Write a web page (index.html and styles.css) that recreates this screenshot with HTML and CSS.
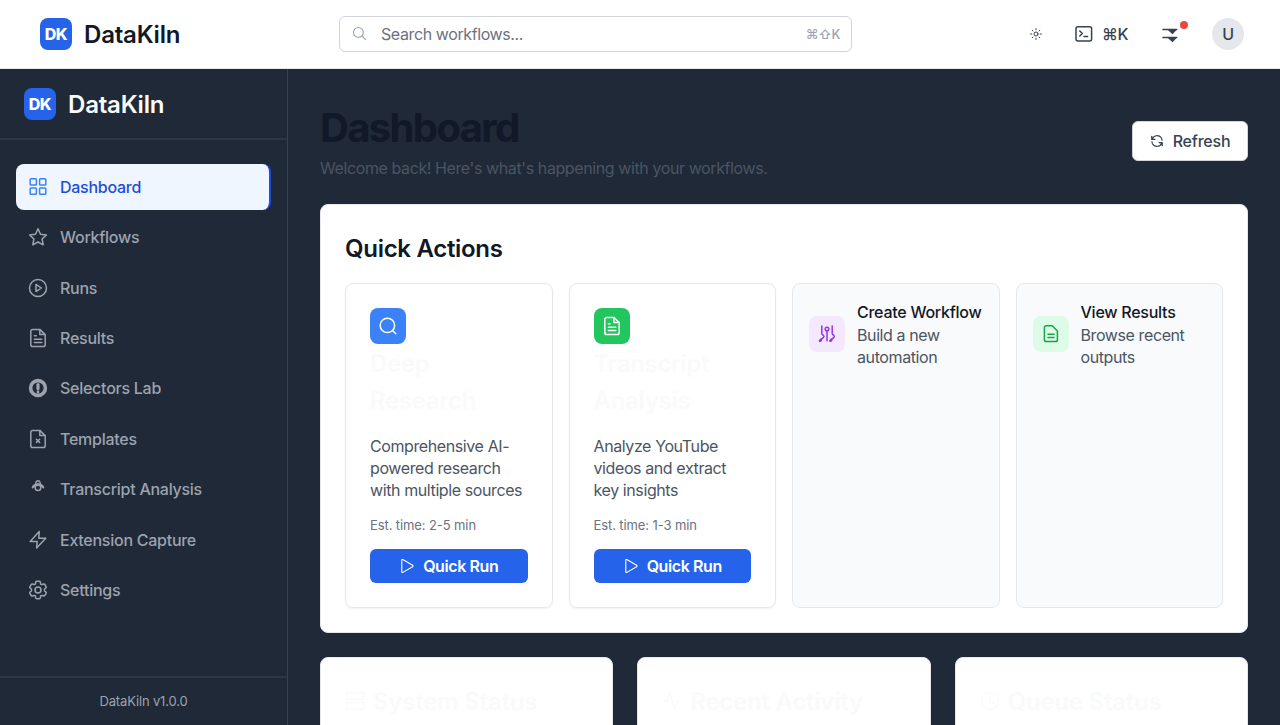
FILE: index.html
```html
<!DOCTYPE html>
<html lang="en">
<head>
<meta charset="utf-8">
<title>DataKiln</title>
<link rel="stylesheet" href="styles.css">
</head>
<body>
<header class="topbar">
  <div class="brand"><span class="logo">DK</span><span class="brand-name">DataKiln</span></div>
  <div class="search">
    <svg class="search-icon" viewBox="0 0 16 16"><circle cx="6.4" cy="6.4" r="4.9"/><path d="m10 10 3.6 3.6"/></svg>
    <span class="search-text">Search workflows...</span>
    <span class="search-keys">⌘⇧K</span>
  </div>
  <div class="tools">
    <svg class="sun" viewBox="0 0 12 12"><circle cx="6" cy="6" r="2"/><path d="M6 .6v1.2M6 10.2v1.2M.6 6h1.2M10.2 6h1.2M2.2 2.2l.8.8M9 9l.8.8M9.8 2.2l-.8.8M3 9l-.8.8"/></svg>
    <span class="command"><svg viewBox="0 0 20 20"><rect x="2" y="2.7" width="15.6" height="14.2" rx="2"/><path d="m5.8 7 2.6 2.5-2.6 2.5M10 12.6h3.6"/></svg><span>⌘K</span></span>
    <span class="bell"><svg viewBox="0 0 20 20"><path d="M3 5.6h13.8M3 13.6h13.8"/><path class="fill" d="M7.6 5.8h9.2l-4.3 4.4zM7.6 13.8h9.2l-4.3 4.4z"/></svg><i class="dot"></i></span>
    <span class="avatar">U</span>
  </div>
</header>
<div class="shell">
  <aside class="sidebar">
    <div class="side-head"><span class="logo">DK</span><span class="brand-name">DataKiln</span></div>
    <nav class="nav">
      <a class="item active"><svg viewBox="0 0 20 20"><rect x="2.2" y="1.8" width="6.2" height="6.2" rx=".8"/><rect x="11.6" y="1.8" width="6.2" height="6.2" rx=".8"/><rect x="2.2" y="11" width="6.2" height="6.2" rx=".8"/><rect x="11.6" y="11" width="6.2" height="6.2" rx=".8"/></svg><span>Dashboard</span></a>
      <a class="item"><svg viewBox="0 0 20 20"><path d="m10 1.8 2.5 5.4 5.9.7-4.3 4.1 1.1 5.8-5.2-2.8-5.2 2.8 1.1-5.8-4.3-4.1 5.9-.7z"/></svg><span>Workflows</span></a>
      <a class="item"><svg viewBox="0 0 20 20"><circle cx="10" cy="10" r="8.5"/><path d="M8 6.4v7.2l5.3-3.6z"/></svg><span>Runs</span></a>
      <a class="item"><svg viewBox="0 0 20 20"><path d="M11.8 1.4H4.6a1.8 1.8 0 0 0-1.8 1.8v13.6a1.8 1.8 0 0 0 1.8 1.8h10.8a1.8 1.8 0 0 0 1.8-1.8V6.6zM11.8 1.4v5.2h5.4M6.4 7.8h1.8M6.4 11.2h7.4M6.4 14.4h7.4"/></svg><span>Results</span></a>
      <a class="item"><svg viewBox="0 0 20 20"><circle cx="10" cy="10" r="7.4" stroke-width="3.6"/><path d="M10 6.6v4.2" stroke-width="3.2"/><path d="M10 14v.1" stroke-width="2.8"/></svg><span>Selectors Lab</span></a>
      <a class="item"><svg viewBox="0 0 20 20"><path d="M11.8 1.4H4.6a1.8 1.8 0 0 0-1.8 1.8v13.6a1.8 1.8 0 0 0 1.8 1.8h10.8a1.8 1.8 0 0 0 1.8-1.8V6.6zM11.8 1.4v5.2h5.4M8.4 10.2l3.2 3.2M11.6 10.2l-3.2 3.2"/></svg><span>Templates</span></a>
      <a class="item"><svg viewBox="0 0 20 20"><circle cx="10" cy="8.8" r="2.8"/><path d="M4.4 8.7c.5-1.8 1.8-3 3.2-3.2.1-2 .7-3.8 2.4-3.8s2.3 1.8 2.4 3.8c1.4.2 2.7 1.4 3.2 3.2M6.4 7.4l3.6-2.8 3.6 2.8M5 8.4l2-2.2M15 8.4l-2-2.2"/></svg><span>Transcript Analysis</span></a>
      <a class="item"><svg viewBox="0 0 20 20"><path d="M11.2 1.6 2.2 11.4h7L8.6 18 17.8 8.3h-7z"/></svg><span>Extension Capture</span></a>
      <a class="item"><svg class="gear" viewBox="1.6 1.6 20.8 20.8"><path d="M9.6 3.9c.1-.5.5-.9 1.1-.9h2.6c.6 0 1 .4 1.1.9l.2 1.3c.1.4.3.7.6.9l.2.1c.3.2.8.2 1.1.1l1.2-.5c.5-.2 1.1 0 1.4.5l1.3 2.2c.3.5.2 1.1-.3 1.4l-1 .8c-.3.3-.4.6-.4 1v.6c0 .4.1.7.4 1l1 .8c.5.3.6.9.3 1.4l-1.3 2.2c-.3.5-.9.7-1.4.5l-1.2-.5c-.3-.1-.8-.1-1.1.1l-.2.1c-.3.2-.5.5-.6.9l-.2 1.3c-.1.5-.5.9-1.1.9h-2.6c-.6 0-1-.4-1.1-.9l-.2-1.3c-.1-.4-.3-.7-.6-.9l-.2-.1c-.3-.2-.8-.2-1.1-.1l-1.2.5c-.5.2-1.1 0-1.4-.5l-1.3-2.2c-.3-.5-.2-1.1.3-1.4l1-.8c.3-.3.4-.6.4-1v-.6c0-.4-.1-.7-.4-1l-1-.8c-.5-.3-.6-.9-.3-1.4l1.3-2.2c.3-.5.9-.7 1.4-.5l1.2.5c.3.1.8.1 1.1-.1l.2-.1c.3-.2.5-.5.6-.9z"/><circle cx="12" cy="12" r="3.1"/></svg><span>Settings</span></a>
    </nav>
    <footer class="side-foot">DataKiln v1.0.0</footer>
  </aside>
  <main class="main">
    <div class="page-head">
      <div><h1 class="title">Dashboard</h1><p class="subtitle">Welcome back! Here's what's happening with your workflows.</p></div>
      <button class="refresh"><svg viewBox="0 0 16 16"><path d="M2 2.6v3.6h3.6M2.4 6A6 6 0 0 1 12.8 4.2M14 13.4V9.8h-3.6M13.6 10A6 6 0 0 1 3.2 11.8M13.3 5.3l.5 1.8M2.7 10.7l-.5-1.8"/></svg>Refresh</button>
    </div>
    <section class="panel">
      <h2 class="panel-title">Quick Actions</h2>
      <div class="actions">
        <article class="run-card">
          <span class="tile blue"><svg viewBox="0 0 20 20"><circle cx="9.4" cy="9.4" r="7.2"/><path d="m14.8 14.8 3 3"/></svg></span>
          <h3 class="ghost">Deep Research</h3>
          <p class="desc">Comprehensive AI-powered research with multiple sources</p>
          <p class="est">Est. time: 2-5 min</p>
          <button class="run"><svg viewBox="0 0 16 16"><path d="M2.8 2.1v11.8c0 .6.5.8 1 .5l9.8-5.7c.6-.4.6-1 0-1.4L3.8 1.6c-.5-.3-1-.1-1 .5z"/></svg>Quick Run</button>
        </article>
        <article class="run-card">
          <span class="tile green"><svg viewBox="0 0 20 20"><path d="M11.8 1.4H4.6a1.8 1.8 0 0 0-1.8 1.8v13.6a1.8 1.8 0 0 0 1.8 1.8h10.8a1.8 1.8 0 0 0 1.8-1.8V6.6zM11.8 1.4v5.2h5.4M6.4 7.8h1.8M6.4 11.2h7.4M6.4 14.4h7.4"/></svg></span>
          <h3 class="ghost">Transcript Analysis</h3>
          <p class="desc">Analyze YouTube videos and extract key insights</p>
          <p class="est">Est. time: 1-3 min</p>
          <button class="run"><svg viewBox="0 0 16 16"><path d="M2.8 2.1v11.8c0 .6.5.8 1 .5l9.8-5.7c.6-.4.6-1 0-1.4L3.8 1.6c-.5-.3-1-.1-1 .5z"/></svg>Quick Run</button>
        </article>
        <article class="link-card">
          <span class="tile purple"><svg viewBox="0 0 20 20"><path d="M4.8 2v7.4c0 1.5 2.1 1.4 2.1 3.1 0 1.9-2.5 1.6-2.5 3.2 0 1.3-1.2 1.8-2 1.3l1.5-2M10 7v9.8M15.2 2v7.4c0 1.5 2.1 1.4 2.1 3.1 0 1.9-2.5 1.6-2.5 3.2 0 1.3-1.2 1.8-2 1.3l1.5-2"/><circle cx="10" cy="5" r="1.8"/></svg></span>
          <div><h4 class="link-title">Create Workflow</h4><p class="link-desc">Build a new automation</p></div>
        </article>
        <article class="link-card">
          <span class="tile mint"><svg viewBox="0 0 20 20"><path d="M11.2 1.8H5.2a1.8 1.8 0 0 0-1.8 1.8v12.2a1.8 1.8 0 0 0 1.8 1.8h9.4a1.8 1.8 0 0 0 1.8-1.8V7zM7 10.2h6M7 13.4h6"/></svg></span>
          <div><h4 class="link-title">View Results</h4><p class="link-desc">Browse recent outputs</p></div>
        </article>
      </div>
    </section>
    <div class="stats">
      <section class="stat"><svg viewBox="0 0 20 20"><rect x="1.4" y="1.6" width="17.2" height="7" rx="1.4"/><rect x="1.4" y="11.4" width="17.2" height="7" rx="1.4"/></svg><h3>System Status</h3></section>
      <section class="stat"><svg viewBox="0 0 20 20"><path d="M1.4 10h3.8L8 1.8l4.6 16.4L15.2 10h3.4"/></svg><h3>Recent Activity</h3></section>
      <section class="stat"><svg viewBox="0 0 20 20"><circle cx="10" cy="10" r="8.6"/><path d="M10 4.6V10l3.6 2.2"/></svg><h3>Queue Status</h3></section>
    </div>
  </main>
</div>
</body>
</html>
```
FILE: styles.css
```css
* { box-sizing: border-box; margin: 0; padding: 0; }
body {
  height: 725px;
  overflow: hidden;
  display: flex;
  flex-direction: column;
  background: #1f2937;
  font: 400 16px/22px Inter, "Liberation Sans", sans-serif;
  letter-spacing: -0.4px;
  color: #111827;
}
svg {
  flex: none;
  width: 20px;
  height: 20px;
  fill: none;
  stroke: currentColor;
  stroke-width: 1.5;
  stroke-linecap: round;
  stroke-linejoin: round;
}
button { font: inherit; letter-spacing: inherit; }

.topbar {
  flex: none;
  height: 69px;
  display: flex;
  align-items: center;
  justify-content: space-between;
  padding: 0 36px 0 40px;
  background: #fff;
  border-bottom: 1px solid #e5e7eb;
}
.brand, .side-head { display: flex; align-items: center; gap: 12px; }
.brand { width: 299px; }
.logo {
  width: 32px;
  height: 32px;
  display: grid;
  place-items: center;
  border-radius: 8px;
  background: #2563eb;
  color: #fff;
  font-weight: 800;
}
.brand-name { font-size: 24px; line-height: 32px; font-weight: 600; letter-spacing: -0.2px; padding-top: 2px; }
.search {
  width: 513px;
  height: 36px;
  display: flex;
  align-items: center;
  padding: 0 11px 0 12px;
  border: 1px solid #d1d5db;
  border-radius: 6px;
}
.search-icon { width: 16px; height: 16px; stroke-width: 1.1; color: #9ca3af; margin-right: 13px; }
.search-text { flex: 1; color: #6b7280; }
.search-keys { font-size: 13px; font-weight: 500; color: #9ca3af; }
.tools { flex: 1; display: flex; align-items: center; justify-content: flex-end; color: #374151; font-weight: 500; }
.sun { width: 12px; height: 12px; stroke-width: 1; margin-right: 32px; }
.command { display: flex; align-items: center; gap: 8px; margin-right: 32px; }
.bell { position: relative; display: flex; margin-right: 32px; }
.fill { fill: currentColor; stroke: none; }
.dot { position: absolute; top: -3px; right: -8px; width: 8px; height: 8px; border-radius: 50%; background: #ef4444; }
.avatar { width: 32px; height: 32px; display: grid; place-items: center; border-radius: 50%; background: #e5e7eb; }

.shell { flex: 1; min-height: 0; display: flex; }
.sidebar {
  flex: none;
  width: 288px;
  display: flex;
  flex-direction: column;
  border-right: 1px solid #374151;
  color: #9ca3af;
}
.side-head { height: 71px; padding: 0 24px; border-bottom: 2px solid #2c3746; color: #f9fafb; }
.nav { flex: 1; display: flex; flex-direction: column; gap: 4px; padding: 23.6px 16px 0; }
.item { height: 46.4px; display: flex; align-items: center; gap: 12px; padding: 0 12px; border-radius: 8px; font-weight: 500; letter-spacing: -0.26px; }
.active { background: #eff6ff; color: #1d4ed8; border-right: 2px solid #1d4ed8; }
.active svg { color: #3b82f6; }
.gear { stroke-width: 1.6; }
.side-foot { height: 49px; display: grid; place-items: center; border-top: 2px solid #2c3746; font-size: 13px; line-height: 18px; letter-spacing: -0.15px; padding-bottom: 1px; }

.main { flex: 1; min-width: 0; padding: 32px 32px 0; overflow: hidden; }
.page-head { height: 79px; display: flex; align-items: center; justify-content: space-between; margin-bottom: 24px; }
.title { font-size: 40px; line-height: 54px; font-weight: 700; letter-spacing: -1.65px; margin-bottom: 2px; }
.subtitle { color: #4b5563; padding-bottom: 1px; }
.refresh {
  width: 116px;
  height: 40px;
  display: flex;
  align-items: center;
  justify-content: center;
  gap: 9px;
  border: 1px solid #d1d5db;
  border-radius: 6px;
  background: #fff;
  color: #374151;
  font-weight: 500;
  letter-spacing: -0.2px;
}
.refresh svg { width: 14px; height: 14px; stroke-width: 1.4; }
.panel { height: 429px; padding: 24px; border: 1px solid #e5e7eb; border-radius: 8px; background: #fff; }
.panel-title { font-size: 24px; line-height: 39px; font-weight: 600; letter-spacing: -0.3px; margin-bottom: 14.5px; }
.actions { display: grid; grid-template-columns: repeat(4, 1fr); gap: 16px; height: 325.5px; }
.run-card, .link-card { border: 1px solid #e5e7eb; border-radius: 8px; }
.run-card { display: flex; flex-direction: column; padding: 24px; box-shadow: 0 1px 2px rgba(0, 0, 0, .05); }
.link-card { display: flex; align-items: flex-start; gap: 12px; padding: 17px 16px; background: #f9fafb; }
.tile { flex: none; width: 36px; height: 36px; display: grid; place-items: center; border-radius: 8px; }
.blue { background: #3b82f6; color: #fff; }
.green { background: #22c55e; color: #fff; }
.purple { background: #f3e8ff; color: #9333ea; }
.mint { background: #dcfce7; color: #16a34a; }
.link-card .tile { margin-top: 15px; }
.ghost { font-size: 24px; line-height: 37px; font-weight: 600; letter-spacing: -0.3px; color: #f9fafb; margin: 1.5px 0 16px; }
.desc { color: #4b5563; white-space: nowrap; white-space: normal; margin-right: -4px; }
.est { margin-top: 15px; font-size: 13px; line-height: 18px; letter-spacing: -0.1px; color: #6b7280; }
.run {
  height: 34px;
  margin-top: auto;
  display: flex;
  align-items: center;
  justify-content: center;
  gap: 8px;
  border: 0;
  border-radius: 6px;
  background: #2563eb;
  color: #fff;
  font-weight: 600;
}
.run svg { width: 16px; height: 16px; stroke-width: 1.1; }
.link-title { font-size: 16px; font-weight: 500; line-height: 23px; letter-spacing: -0.25px; white-space: nowrap; }
.link-desc { color: #4b5563; }
.stats { display: grid; grid-template-columns: repeat(3, 1fr); gap: 24px; margin-top: 24px; }
.stat { height: 160px; display: flex; align-items: flex-start; gap: 8px; padding: 24px; border: 1px solid #e5e7eb; border-radius: 8px; background: #fff; color: #f9fafb; }
.stat svg { margin-top: 9px; }
.stat h3 { font-size: 24px; line-height: 40px; font-weight: 600; letter-spacing: -0.25px; white-space: nowrap; }
```
